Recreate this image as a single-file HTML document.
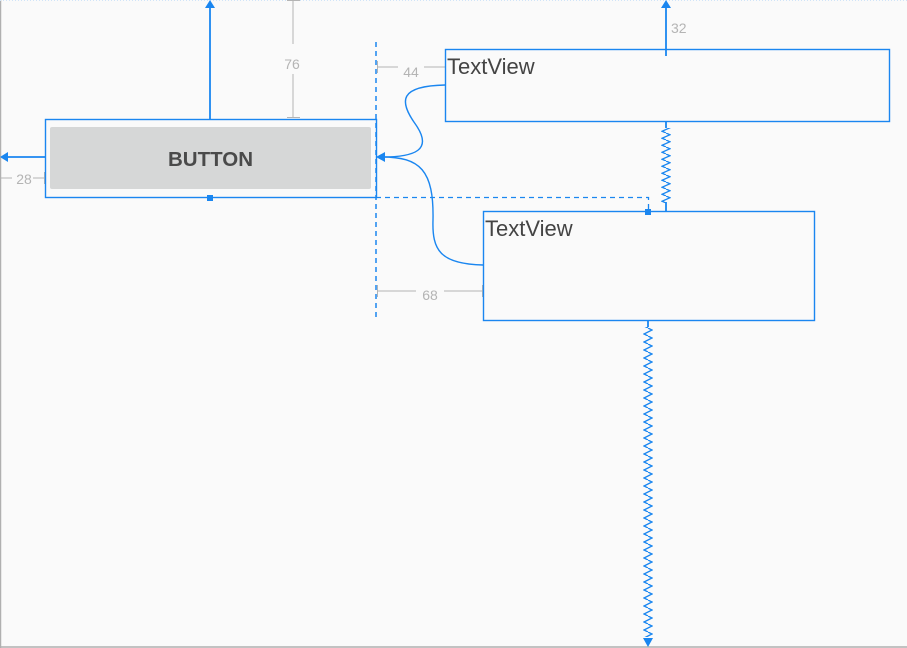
<!DOCTYPE html>
<html><head><style>
html,body{margin:0;padding:0;background:#fafafa;}
svg{display:block;}
text{font-family:"Liberation Sans",sans-serif;}
</style></head><body>
<svg width="907" height="648" viewBox="0 0 907 648" xmlns="http://www.w3.org/2000/svg">
<defs>
<pattern id="zz1" x="661" y="0" width="10" height="7" patternUnits="userSpaceOnUse">
<polyline points="5,0 9,1.75 1,5.25 5,7" fill="none" stroke="#1a86f0" stroke-width="1.3"/>
</pattern>
<pattern id="zz2" x="643" y="0" width="10" height="8" patternUnits="userSpaceOnUse">
<polyline points="5,0 9,2 1,6 5,8" fill="none" stroke="#1a86f0" stroke-width="1.3"/>
</pattern>
</defs>
<rect width="907" height="648" fill="#fafafa"/>
<line x1="0.5" y1="0" x2="0.5" y2="648" stroke="#b0b0b0" stroke-width="1.5"/>
<line x1="0" y1="647" x2="907" y2="647" stroke="#b0b0b0" stroke-width="1.5"/>
<line x1="0" y1="0.5" x2="907" y2="0.5" stroke="#d0e4f8" stroke-width="1" stroke-dasharray="1,2"/>

<g stroke="#b4b4b4" stroke-width="1" fill="none">
<line x1="293" y1="0" x2="293" y2="44"/><line x1="293" y1="74" x2="293" y2="117"/>
<line x1="287" y1="117.5" x2="300" y2="117.5"/><line x1="287" y1="0.5" x2="300" y2="0.5"/>
<line x1="1" y1="178" x2="12" y2="178"/><line x1="33" y1="178" x2="45" y2="178"/>
<line x1="44.5" y1="172" x2="44.5" y2="184"/>
<line x1="377" y1="67" x2="398" y2="67"/><line x1="424" y1="67" x2="445" y2="67"/>
<line x1="377.5" y1="61" x2="377.5" y2="73"/><line x1="445.5" y1="61" x2="445.5" y2="73"/>
<line x1="377" y1="291" x2="416" y2="291"/><line x1="444" y1="291" x2="483" y2="291"/>
<line x1="377.5" y1="285" x2="377.5" y2="297"/><line x1="482.5" y1="285" x2="482.5" y2="297"/>
</g>
<g fill="#b4b4b4" font-size="14">
<text x="292" y="69" text-anchor="middle">76</text>
<text x="24" y="184" text-anchor="middle">28</text>
<text x="411" y="77" text-anchor="middle">44</text>
<text x="430" y="300" text-anchor="middle">68</text>
<text x="671" y="33">32</text>
</g>

<rect x="50" y="127" width="321" height="62" rx="2" fill="#d6d7d7"/>
<text x="210.5" y="166" text-anchor="middle" font-size="20.5" font-weight="bold" fill="#4a4a4a">BUTTON</text>
<rect x="45.5" y="119.5" width="331" height="78" fill="none" stroke="#1a86f0" stroke-width="1.4"/>

<g stroke="#1a86f0" stroke-width="1.8" fill="none">
<line x1="210" y1="119" x2="210" y2="5"/>
<line x1="45" y1="157" x2="6" y2="157"/>
<line x1="666" y1="56" x2="666" y2="5"/>
<line x1="376" y1="42" x2="376" y2="318" stroke-dasharray="5,4" stroke-width="1.5"/>
<polyline points="376,197.5 648.5,197.5 648.5,212" stroke-dasharray="5,4" stroke-width="1.3"/>
<path d="M445,85 C400,86 398,100 416,125 C433,150 415,157 382,157" stroke-width="1.4"/>
<path d="M483,265 C440,264 432,250 433,220 C434,170 420,157 382,157" stroke-width="1.4"/>
<line x1="666" y1="121" x2="666" y2="128"/>
<line x1="666" y1="202" x2="666" y2="211"/>
<line x1="648" y1="320" x2="648" y2="327"/>
</g>
<rect x="661" y="128" width="10" height="75" fill="url(#zz1)"/>
<rect x="643" y="327" width="10" height="310" fill="url(#zz2)"/>
<g fill="#1a86f0">
<polygon points="210,0 205,8 215,8"/>
<polygon points="0,157 8,152 8,162"/>
<polygon points="666,0 661,8 671,8"/>
<polygon points="376,157 385,152 385,162"/>
<polygon points="648,647 643,638 653,638"/>
<rect x="207" y="195" width="6" height="6"/>
<rect x="645" y="209" width="6" height="6"/>
</g>

<rect x="445.5" y="49.5" width="444" height="72" fill="none" stroke="#1a86f0" stroke-width="1.4"/>
<text x="447" y="74" font-size="22" fill="#444">TextView</text>
<rect x="483.5" y="211.5" width="331" height="109" fill="none" stroke="#1a86f0" stroke-width="1.4"/>
<text x="485" y="236" font-size="22" fill="#444">TextView</text>
</svg>
</body></html>
